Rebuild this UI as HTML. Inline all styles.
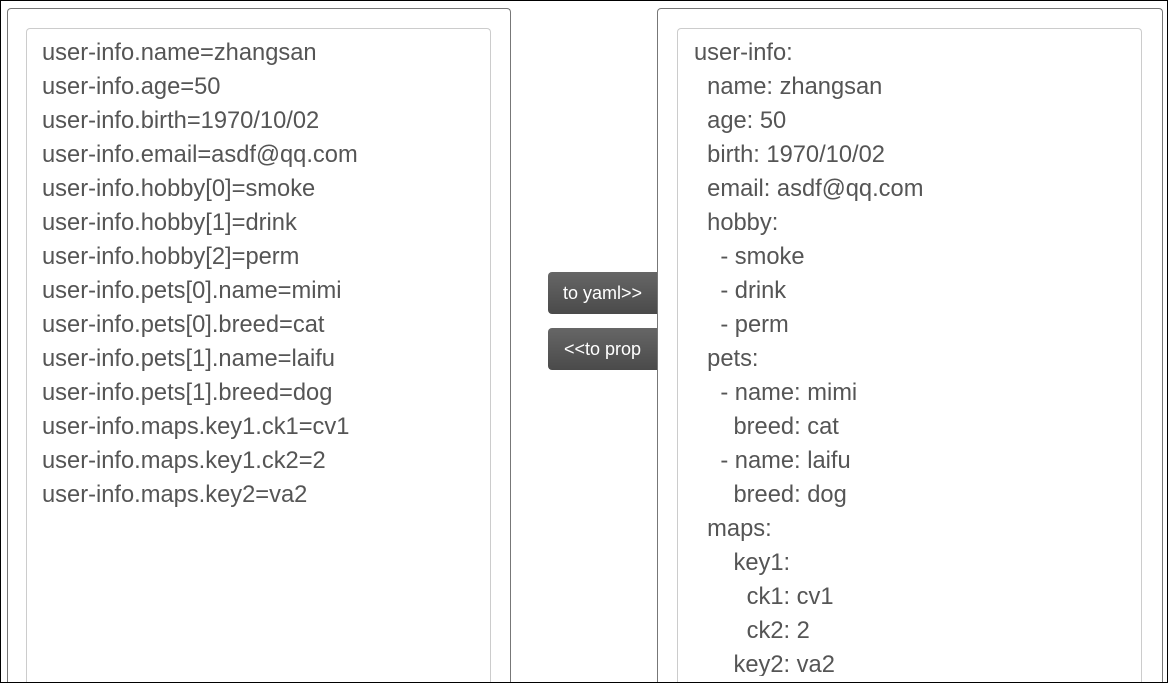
<!DOCTYPE html>
<html><head><style>
html,body{margin:0;padding:0;width:1168px;height:683px;overflow:hidden;}
body{position:relative;background:#fff;font-family:"Liberation Sans",Arial,sans-serif;}
.frame{position:absolute;left:0;top:0;width:1166px;height:681px;border:1px solid #000;z-index:5;pointer-events:none;}
.panel{position:absolute;top:8px;height:675px;border:1px solid #777;border-bottom:none;border-radius:4px 4px 0 0;background:#fff;box-sizing:border-box;}
.ta{position:absolute;top:28px;height:655px;border:1px solid #ccc;border-bottom:none;border-radius:4px 4px 0 0;box-sizing:border-box;}
.txt{position:absolute;top:36px;font-size:23.7px;line-height:34px;color:#555;white-space:pre;}
.btn{position:absolute;left:548px;width:109px;height:42px;background:linear-gradient(#666,#4a4a4a);color:#fff;border-radius:4px 0 0 4px;font-size:18px;text-align:center;line-height:42px;}
</style></head><body>
<div class="frame"></div>
<div class="panel" style="left:7px;width:504px"></div>
<div class="ta" style="left:26px;width:465px"></div>
<div class="txt" style="left:42px">user-info.name=zhangsan
user-info.age=50
user-info.birth=1970/10/02
user-info.email=asdf@qq.com
user-info.hobby[0]=smoke
user-info.hobby[1]=drink
user-info.hobby[2]=perm
user-info.pets[0].name=mimi
user-info.pets[0].breed=cat
user-info.pets[1].name=laifu
user-info.pets[1].breed=dog
user-info.maps.key1.ck1=cv1
user-info.maps.key1.ck2=2
user-info.maps.key2=va2</div>
<div class="panel" style="left:657px;width:506px"></div>
<div class="ta" style="left:677px;width:465px"></div>
<div class="txt" style="left:694px;height:640px;overflow:hidden">user-info:
  name: zhangsan
  age: 50
  birth: 1970/10/02
  email: asdf@qq.com
  hobby:
    - smoke
    - drink
    - perm
  pets:
    - name: mimi
      breed: cat
    - name: laifu
      breed: dog
  maps:
      key1:
        ck1: cv1
        ck2: 2
      key2: va2</div>
<div class="btn" style="top:272px">to yaml&gt;&gt;</div>
<div class="btn" style="top:328px">&lt;&lt;to prop</div>
</body></html>
